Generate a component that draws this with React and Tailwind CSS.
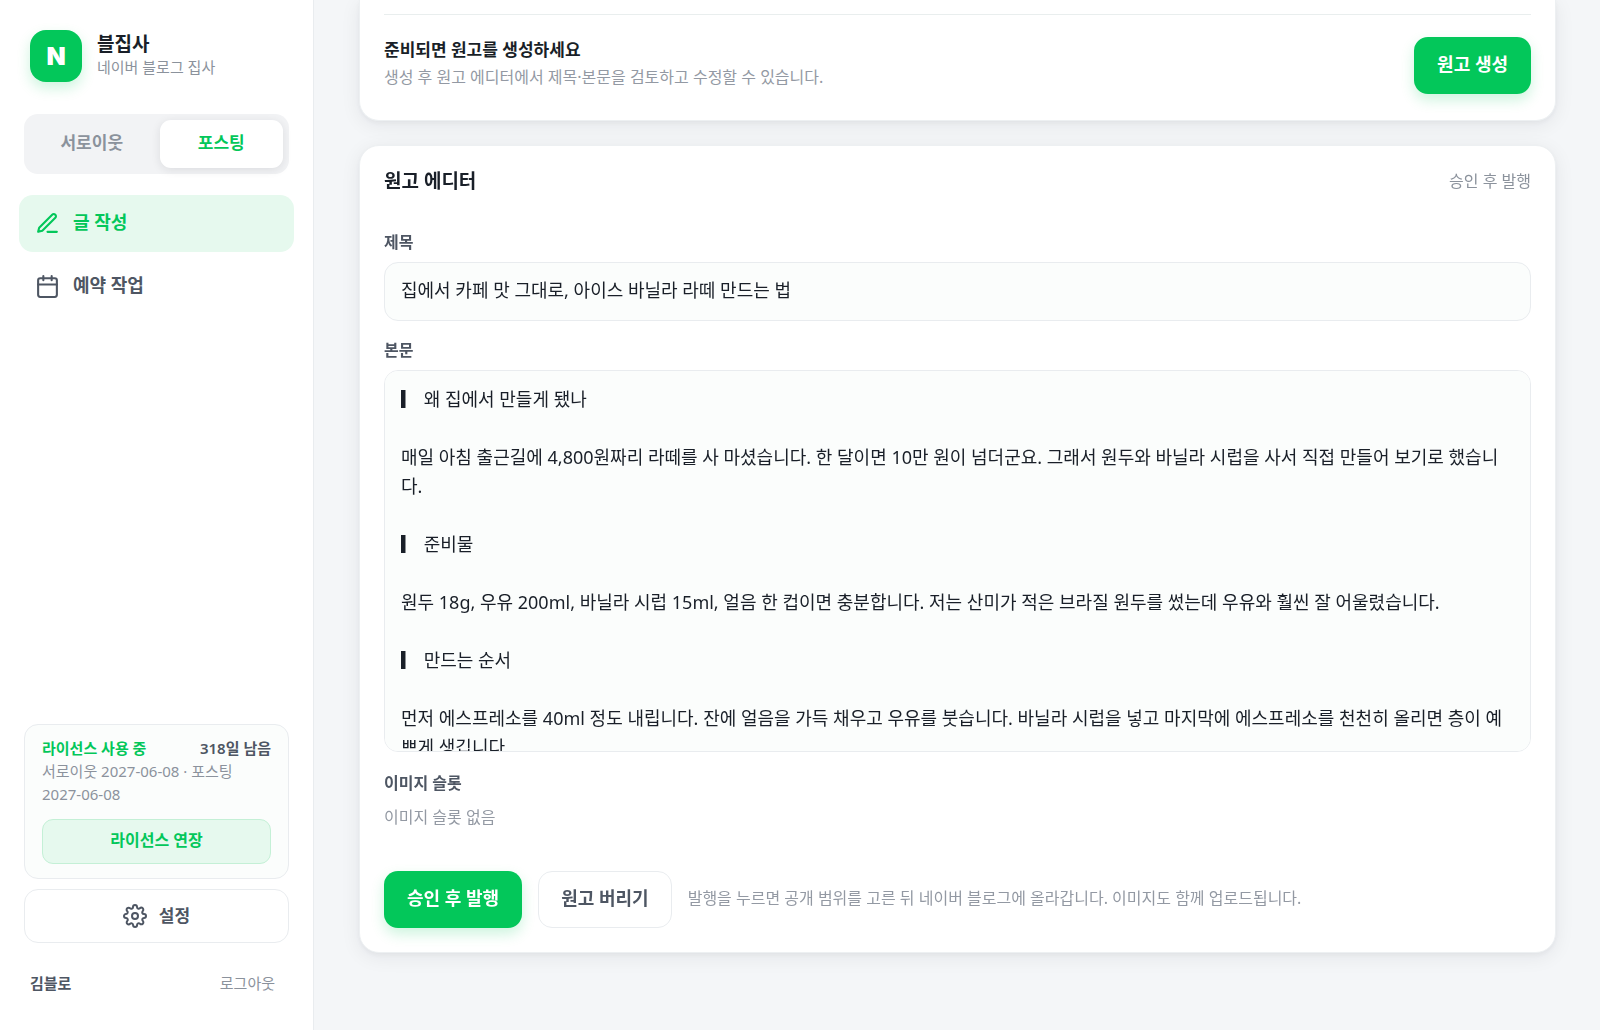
import { useState } from 'react';
import { FiCalendar, FiEdit3, FiSettings } from 'react-icons/fi';

const BODY = `▎ 왜 집에서 만들게 됐나

매일 아침 출근길에 4,800원짜리 라떼를 사 마셨습니다. 한 달이면 10만 원이 넘더군요. 그래서 원두와 바닐라 시럽을 사서 직접 만들어 보기로 했습니다.

▎ 준비물

원두 18g, 우유 200ml, 바닐라 시럽 15ml, 얼음 한 컵이면 충분합니다. 저는 산미가 적은 브라질 원두를 썼는데 우유와 훨씬 잘 어울렸습니다.

▎ 만드는 순서

먼저 에스프레소를 40ml 정도 내립니다. 잔에 얼음을 가득 채우고 우유를 붓습니다. 바닐라 시럽을 넣고 마지막에 에스프레소를 천천히 올리면 층이 예쁘게 생깁니다.`;

function Sidebar() {
    return (
        <aside className="flex w-[314px] shrink-0 flex-col border-r border-[#e9ecef] bg-white px-6 pt-[30px] pb-8">
            <div className="flex items-center gap-[15px] px-1.5">
                <div className="flex size-[52px] items-center justify-center rounded-2xl bg-[#03c75a] font-[Inter,sans-serif] text-[25px] leading-none font-black text-white shadow-[0_6px_14px_rgba(3,199,90,0.2)]">
                    N
                </div>
                <div className="pb-0.5">
                    <p className="text-[19px] leading-6 font-bold text-[#191f28]">블집사</p>
                    <p className="text-[15px] leading-[23px] text-[#8b929c]">네이버 블로그 집사</p>
                </div>
            </div>

            <div className="mt-8 grid grid-cols-2 gap-1.5 rounded-[14px] bg-[#f2f3f5] p-1.5">
                <button type="button" className="h-12 rounded-[11px] pb-0.5 text-[17px] font-semibold text-[#8b929c]">
                    서로이웃
                </button>
                <button type="button" className="h-12 rounded-[11px] bg-white pb-0.5 text-[17px] font-bold text-[#03c75a] shadow-[0_2px_10px_rgba(25,31,40,0.1)]">
                    포스팅
                </button>
            </div>

            <nav className="-mx-[5px] mt-[21px] flex flex-col gap-1.5">
                <a href="#write" className="flex h-[57px] items-center gap-[13px] rounded-[14px] bg-[#e6f9ee] px-4 text-lg font-bold text-[#03c75a]">
                    <FiEdit3 className="size-[25px]" strokeWidth={2} />
                    <span className="pb-1">글 작성</span>
                </a>
                <a href="#jobs" className="flex h-[57px] items-center gap-[13px] rounded-[14px] px-4 text-lg font-semibold text-[#4e5663]">
                    <FiCalendar className="size-[25px]" strokeWidth={2} />
                    <span className="pb-1">예약 작업</span>
                </a>
            </nav>

            <div className="mt-auto rounded-[14px] border border-[#e9ecef] bg-[#fbfdfc] px-[17px] pt-[11px] pb-[14px]">
                <div className="flex items-center justify-between text-[15px] leading-6 font-bold">
                    <span className="text-[#03c75a]">라이선스 사용 중</span>
                    <span className="font-semibold text-[#4e5663]">318일 남음</span>
                </div>
                <p className="text-[15px] leading-[23px] text-[#8b929c]">서로이웃 2027-06-08 · 포스팅 2027-06-08</p>
                <button type="button" className="mt-[13px] h-[45px] w-full rounded-[11px] border border-[#c4f0d6] bg-[#e6f9ee] pb-1 text-base font-bold text-[#03c75a]">
                    라이선스 연장
                </button>
            </div>
            <button type="button" className="mt-2.5 flex h-[54px] items-center justify-center gap-3 rounded-[14px] border border-[#e9ecef] text-[17px] font-semibold text-[#4e5663]">
                <FiSettings className="size-6" strokeWidth={2} />
                설정
            </button>
            <div className="mt-[25px] flex items-center justify-between pr-3.5 pl-1.5 text-[15px] leading-[30px]">
                <span className="font-semibold text-[#4e5663]">김블로</span>
                <button type="button" className="text-[#8b929c]">로그아웃</button>
            </div>
        </aside>
    );
}

export default function App() {
    const [title, setTitle] = useState('집에서 카페 맛 그대로, 아이스 바닐라 라떼 만드는 법');
    const [body, setBody] = useState(BODY);

    return (
        <div className="flex h-screen overflow-hidden bg-[#f4f6f8] font-['Noto_Sans','Noto_Sans_CJK_KR',sans-serif]">
            <Sidebar />
            <main className="flex min-w-0 flex-1 flex-col gap-6 overflow-hidden pr-11 pl-[45px]">
                <section className="rounded-b-[20px] border border-t-0 border-[#edf0f2] bg-white px-6 pt-3.5 pb-[26px] shadow-[0_2px_4px_rgba(25,31,40,0.04),0_4px_20px_rgba(25,31,40,0.07)]">
                    <div className="flex items-start justify-between border-t border-[#e9eeee] pt-[22px]">
                        <div>
                            <h2 className="text-[17px] leading-[26px] font-bold text-[#191f28]">준비되면 원고를 생성하세요</h2>
                            <p className="text-base leading-7 text-[#9399a3]">생성 후 원고 에디터에서 제목·본문을 검토하고 수정할 수 있습니다.</p>
                        </div>
                        <button type="button" className="h-[57px] rounded-[14px] bg-[#03c75a] px-[23px] pb-1 text-lg font-bold text-white shadow-[0_6px_14px_rgba(3,199,90,0.2)]">
                            원고 생성
                        </button>
                    </div>
                </section>

                <section className="rounded-[20px] border border-[#edf0f2] bg-white px-6 pt-5 pb-6 shadow-[0_2px_4px_rgba(25,31,40,0.04),0_4px_20px_rgba(25,31,40,0.07)]">
                    <div className="flex items-center justify-between">
                        <h2 className="text-[19px] leading-[30px] font-bold text-[#191f28]">원고 에디터</h2>
                        <span className="text-base text-[#8b929c]">승인 후 발행</span>
                    </div>

                    <label htmlFor="title" className="mt-8 block text-base leading-7 font-semibold text-[#4e5663]">제목</label>
                    <input
                        id="title"
                        value={title}
                        onChange={(e) => setTitle(e.target.value)}
                        className="mt-1.5 block h-[59px] w-full rounded-[14px] border border-[#e9ecef] bg-[#fbfdfc] px-4 pb-1.5 text-lg text-[#191f28] outline-none"
                    />

                    <label htmlFor="body" className="mt-[15px] block text-base leading-7 font-semibold text-[#4e5663]">본문</label>
                    <textarea
                        id="body"
                        value={body}
                        onChange={(e) => setBody(e.target.value)}
                        className="mt-1.5 block h-[382px] w-full resize-none overflow-y-auto rounded-[14px] border border-[#e9ecef] bg-[#fbfdfc] px-4 pt-3.5 text-lg leading-[29px] text-[#191f28] outline-none [scrollbar-width:none]"
                    />

                    <h3 className="mt-[17px] text-base leading-7 font-semibold text-[#4e5663]">이미지 슬롯</h3>
                    <p className="mt-1.5 text-base leading-7 text-[#9399a3]">이미지 슬롯 없음</p>

                    <div className="mt-10 flex items-center gap-4">
                        <button type="button" className="h-[57px] rounded-[14px] bg-[#03c75a] px-[23px] pb-1 text-lg font-bold text-white shadow-[0_6px_14px_rgba(3,199,90,0.2)]">
                            승인 후 발행
                        </button>
                        <button type="button" className="h-[57px] rounded-[14px] border border-[#e9ecef] bg-white px-[22px] pb-1 text-lg font-semibold text-[#4e5663]">
                            원고 버리기
                        </button>
                        <p className="pb-1 text-base text-[#9399a3]">발행을 누르면 공개 범위를 고른 뒤 네이버 블로그에 올라갑니다. 이미지도 함께 업로드됩니다.</p>
                    </div>
                </section>
            </main>
        </div>
    );
}
